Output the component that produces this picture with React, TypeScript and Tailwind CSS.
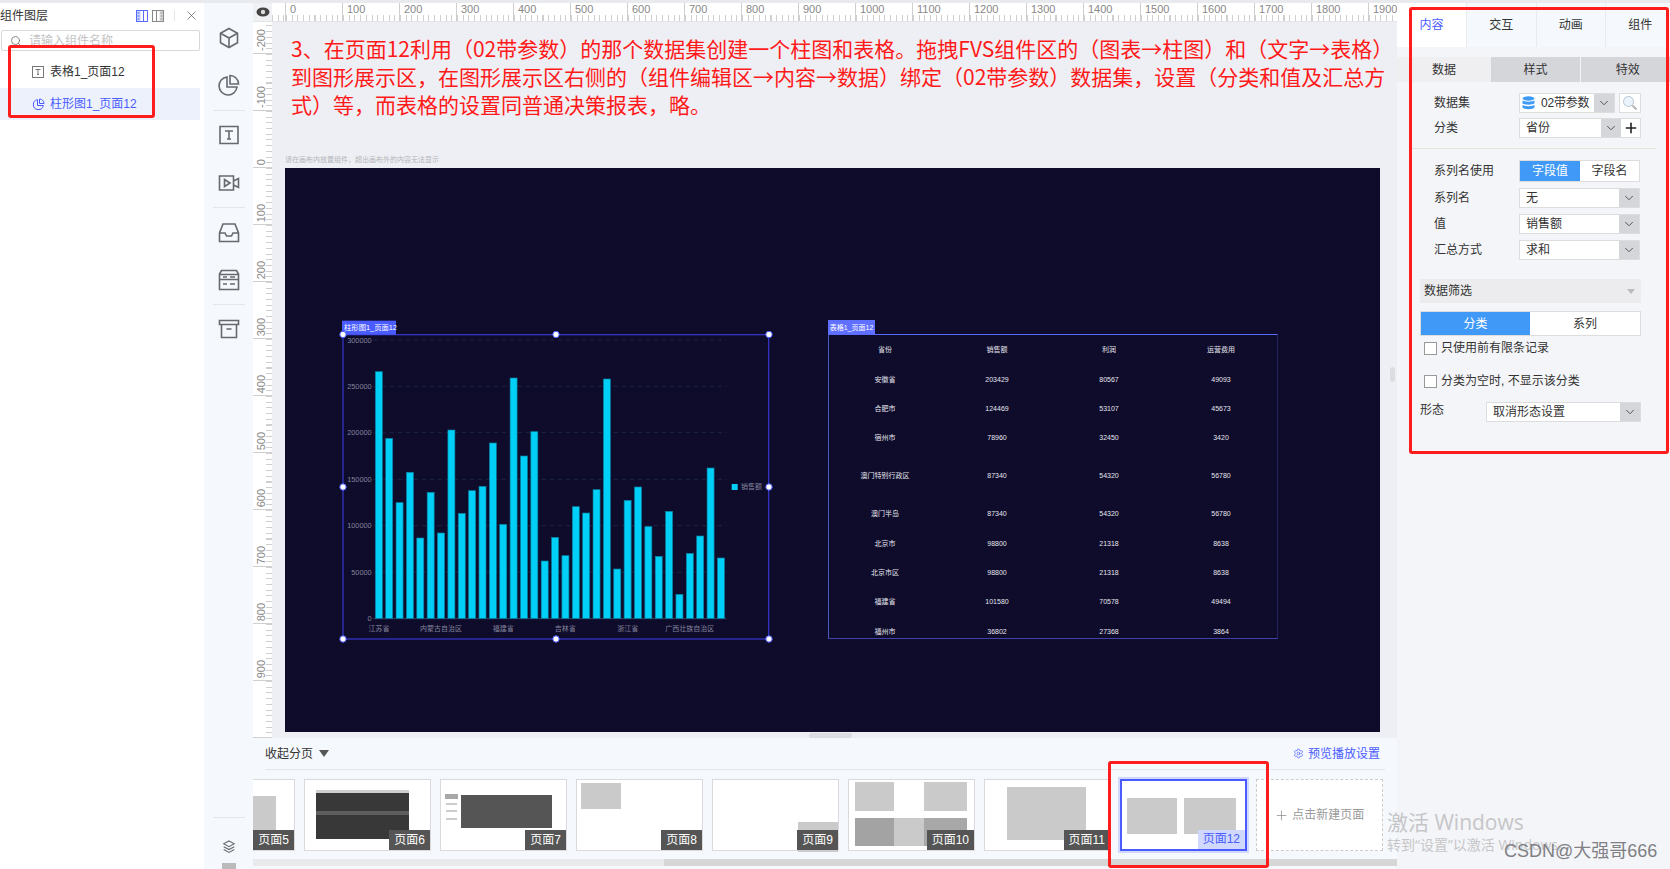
import React from 'react'
import { ChevronDown, X, Plus, Settings, Search } from 'lucide-react'

const hTicks = Array.from({ length: 21 }, (_, i) => i * 100)
const vTicks = [-200, -100, 0, 100, 200, 300, 400, 500, 600, 700, 800, 900, 1000]

// bar centers / tops measured in a 3x crop of the chart
const barTops = [185, 385, 578, 487, 684, 547, 669, 360, 610, 542, 529, 399, 643, 204, 438, 365, 753, 682, 737, 590, 609, 539, 207, 777, 571, 531, 650, 739, 604, 853, 730, 678, 474, 744]
const yLabels = [
  ['300000', 90],
  ['250000', 229],
  ['200000', 368],
  ['150000', 508],
  ['100000', 647],
  ['50000', 787],
  ['0', 925],
] as const
const xLabels = [
  ['江苏省', 147],
  ['内蒙古自治区', 333],
  ['福建省', 520],
  ['吉林省', 706],
  ['浙江省', 893],
  ['广西壮族自治区', 1079],
] as const

const tableRows = [
  ['省份', '销售额', '利润', '运营费用'],
  ['安徽省', '203429', '80567', '49093'],
  ['合肥市', '124469', '53107', '45673'],
  ['宿州市', '78960', '32450', '3420'],
  ['澳门特别行政区', '87340', '54320', '56780'],
  ['澳门半岛', '87340', '54320', '56780'],
  ['北京市', '98800', '21318', '8638'],
  ['北京市区', '98800', '21318', '8638'],
  ['福建省', '101580', '70578', '49494'],
  ['福州市', '36802', '27368', '3864'],
]

const thumbs = [
  { label: '页面5', first: true, blocks: ['left-[80px] top-[16px] w-[27px] h-[34px] bg-[#cacaca]'] },
  {
    label: '页面6',
    blocks: [
      'left-[11px] top-[11px] w-[93px] h-[48px] bg-[#383838]',
      'left-[11px] top-[10px] w-[93px] h-[3px] bg-[#cfcfcf]',
      'left-[11px] top-[31px] w-[93px] h-[4px] bg-[#5e5e5e]',
    ],
  },
  {
    label: '页面7',
    blocks: [
      'left-[20px] top-[15px] w-[91px] h-[33px] bg-[#555555]',
      'left-[4px] top-[14px] w-[13px] h-[5px] bg-[#a8a8a8]',
      'left-[5px] top-[23px] w-[11px] h-[2px] bg-[#cccccc]',
      'left-[5px] top-[30px] w-[11px] h-[2px] bg-[#cccccc]',
      'left-[5px] top-[38px] w-[11px] h-[2px] bg-[#cccccc]',
    ],
  },
  { label: '页面8', blocks: ['left-[4px] top-[3px] w-[40px] h-[26px] bg-[#cacaca]'] },
  { label: '页面9', blocks: ['left-[85px] top-[42px] w-[40px] h-[30px] bg-[#cacaca]'] },
  {
    label: '页面10',
    blocks: [
      'left-[6px] top-[2px] w-[39px] h-[29px] bg-[#cacaca]',
      'left-[75px] top-[2px] w-[43px] h-[29px] bg-[#cacaca]',
      'left-[45px] top-[38px] w-[30px] h-[28px] bg-[#cacaca]',
      'left-[6px] top-[38px] w-[39px] h-[28px] bg-[#a3a3a3]',
      'left-[75px] top-[38px] w-[43px] h-[28px] bg-[#a8a8a8]',
    ],
  },
  { label: '页面11', blocks: ['left-[22px] top-[7px] w-[79px] h-[53px] bg-[#cacaca]'] },
]

function Arrow({ className = 'w-[20px]' }: { className?: string }) {
  return (
    <div className={`${className} h-full bg-[#d5d6da] flex items-center justify-center shrink-0`}>
      <ChevronDown size={14} strokeWidth={1.5} className="text-[#444]" />
    </div>
  )
}

function SelectBox({ value, className = 'w-[121px]' }: { value: string; className?: string }) {
  return (
    <div className={`${className} h-[20px] bg-white border border-[#ddd] flex items-center justify-between`}>
      <span className="pl-[6px]">{value}</span>
      <Arrow />
    </div>
  )
}

function Row({ label, children, className = 'mt-[6px]' }: { label: string; children: React.ReactNode; className?: string }) {
  return (
    <div className={`flex items-center pl-[37px] ${className}`}>
      <span className="w-[85px] shrink-0">{label}</span>
      {children}
    </div>
  )
}

function Check({ label, className }: { label: string; className: string }) {
  return (
    <div className={`flex items-center pl-[27px] h-[14px] ${className}`}>
      <span className="w-[13px] h-[13px] bg-white border border-[#999] mr-[4px]" />
      {label}
    </div>
  )
}

function Thumb({ label, blocks, first }: { label: string; blocks: string[]; first?: boolean }) {
  return (
    <div className={`relative w-[127.5px] h-[72px] shrink-0 bg-white border border-[#d8dade] ${first ? 'ml-[-85.5px]' : ''}`}>
      {blocks.map((b) => (
        <div key={b} className={`absolute ${b}`} />
      ))}
      <div className="absolute right-0 bottom-0 h-[20px] px-[5px] bg-[#555555] text-white text-[12px] leading-[20px]">{label}</div>
    </div>
  )
}

function RailIcon({ children }: { children: React.ReactNode }) {
  return (
    <svg width="24" height="24" viewBox="0 0 24 24" fill="none" stroke="#666a70" strokeWidth="1.6" className="block">
      {children}
    </svg>
  )
}

function PaneIcon({ color, fill, flip, className }: { color: string; fill: string; flip?: boolean; className: string }) {
  return (
    <svg width="12" height="12" viewBox="0 0 12 12" fill="none" className={`${flip ? '-scale-x-100' : ''} ${className}`}>
      <rect x="0.5" y="0.5" width="4" height="11" fill={fill} />
      <rect x="0.5" y="0.5" width="11" height="11" stroke={color} />
      <path d="M7.5 0.5v11M1.5 3h2M1.5 6h2M1.5 9h2" stroke={color} />
    </svg>
  )
}

function HRuler() {
  return (
    <div className="h-[19px] flex bg-white border-b border-[#e3e4e8] shrink-0 overflow-hidden">
      <div className="w-[19px] shrink-0 bg-[#f0f1f4] flex items-center justify-center">
        <svg width="14" height="10" viewBox="0 0 14 10">
          <ellipse cx="7" cy="5" rx="6.5" ry="4.5" fill="#444" />
          <circle cx="7" cy="5" r="2.2" fill="#ddd" />
        </svg>
      </div>
      <div className="w-[13px] shrink-0 mt-auto h-[6px] bg-[repeating-linear-gradient(to_right,#cfcfcf_0,#cfcfcf_1px,transparent_1px,transparent_5.7px)]" />
      {hTicks.map((n) => (
        <div key={n} className="relative w-[57px] h-full shrink-0 border-l border-[#cfcfcf]">
          {n < 2000 && <span className="absolute left-[4px] top-[-1px] text-[11px] leading-[14px] text-[#888]">{n}</span>}
          <div className="absolute left-0 right-0 bottom-0 h-[6px] bg-[repeating-linear-gradient(to_right,#cfcfcf_0,#cfcfcf_1px,transparent_1px,transparent_5.7px)]" />
        </div>
      ))}
    </div>
  )
}

function VRuler() {
  return (
    <div className="w-[19px] h-full shrink-0 bg-white overflow-hidden">
      <div className="mt-[-25px]">
        {vTicks.map((n) => (
          <div key={n} className="relative h-[57px] border-b border-[#cfcfcf]">
            {n < 1000 && (
              <span className="absolute left-[2px] bottom-[2px] [writing-mode:vertical-rl] rotate-180 text-[11px] leading-[12px] text-[#888]">{n}</span>
            )}
            <div className="absolute right-0 top-0 bottom-0 w-[6px] bg-[repeating-linear-gradient(to_bottom,#cfcfcf_0,#cfcfcf_1px,transparent_1px,transparent_5.7px)]" />
          </div>
        ))}
      </div>
    </div>
  )
}

function BarChart() {
  const handles = [
    [343, 334.5],
    [556, 334.5],
    [769, 334.5],
    [343, 487],
    [769, 487],
    [343, 639],
    [556, 639],
    [769, 639],
  ]
  return (
    <svg className="absolute left-[45px] top-[142px]" width="450" height="340" viewBox="0 0 1350 1020">
      {yLabels.map(([t, y]) => (
        <g key={t}>
          {t !== '0' && <line x1="130" x2="1190" y1={y} y2={y} stroke="#1b2444" strokeWidth="3" strokeDasharray="14 10" />}
          <text x="125" y={y + 8} textAnchor="end" fontSize="22" fill="#85859b">{t}</text>
        </g>
      ))}
      <line x1="130" x2="1190" y1="926" y2="926" stroke="#33405f" strokeWidth="3" />
      {barTops.map((top, i) => (
        <rect key={i} x={136 + i * 31.1} y={top} width="21" height={925 - top} fill="#00cff7" stroke="#0a7f9e" strokeWidth="2" />
      ))}
      {xLabels.map(([t, x]) => (
        <text key={t} x={x} y="964" textAnchor="middle" fontSize="21" fill="#85859b">{t}</text>
      ))}
      <rect x="1205" y="522" width="18" height="18" fill="#00cff7" />
      <text x="1233" y="538" fontSize="21" fill="#85859b">销售额</text>
      <rect x="39" y="74" width="1277" height="913" fill="none" stroke="#3434c0" strokeWidth="4" />
      <rect x="36" y="32" width="162" height="42" fill="#4a5cff" />
      <text x="42" y="60" fontSize="22" fill="#fff">柱形图1_页面12</text>
      {handles.map(([x, y]) => (
        <circle key={`${x}-${y}`} cx={(x - 330) * 3} cy={(y - 310) * 3} r="9.5" fill="#fff" stroke="#4a5cff" strokeWidth="3" />
      ))}
    </svg>
  )
}

function DataTable() {
  return (
    <div className="absolute left-[543px] top-[152px] w-[450px]">
      <div className="w-[47px] h-[14px] bg-[#5f6fff] text-white text-[7px] leading-[15px] text-center whitespace-nowrap">表格1_页面12</div>
      <div className="h-[305px] pt-[1px] overflow-hidden border border-t-[#5a6cff] border-l-[#4a5ac0] border-r-[#23235f] border-b-[#3f43a8] text-[7px] text-[#e6e6ee]">
        {tableRows.map((r, i) => (
          <div key={r[0] + i} className={`grid grid-cols-4 items-center text-center ${i === 4 ? 'h-[46.8px]' : 'h-[29.3px]'}`}>
            {r.map((c, j) => (
              <span key={j}>{c}</span>
            ))}
          </div>
        ))}
      </div>
    </div>
  )
}

export default function App() {
  return (
    <div className="relative w-[1670px] h-[869px] overflow-hidden bg-white font-['Liberation_Sans','Noto_Sans_CJK_SC',sans-serif] text-[12px] text-[#333]">
      <div className="h-[3px] bg-[#e9eaee]" />
      <div className="flex h-[866px]">
        {/* layer panel */}
        <aside className="w-[204px] shrink-0 bg-white">
          <div className="h-[25px] flex items-center justify-between pr-[5px]">
            <span>组件图层</span>
            <div className="flex items-center">
              <PaneIcon color="#5a6cff" fill="#c9d2ff" className="mr-[4px]" />
              <PaneIcon color="#888" fill="#ddd" flip className="mr-[10px]" />
              <span className="w-px h-[11px] bg-[#e5e5e5] mr-[9px]" />
              <X size={15} strokeWidth={1.1} className="text-[#555]" />
            </div>
          </div>
          <div className="mt-[2px] w-[199px] h-[21px] ml-[1px] border border-[#d9d9d9] rounded-[2px] flex items-center pl-[8px] text-[#c4c4c4]">
            <Search size={12} strokeWidth={1.5} className="text-[#666] mr-[7px]" />
            请输入组件名称
          </div>
          <div className="pt-[4px]">
            <div className="h-[33px] w-[200px] flex items-center pl-[32px]">
              <svg width="12" height="12" viewBox="0 0 12 12" className="mr-[6px]" fill="none" stroke="#777">
                <rect x="0.5" y="0.5" width="11" height="11" />
                <path d="M3.5 3.5h5M6 3.5v5M5 8.5h2" />
              </svg>
              表格1_页面12
            </div>
            <div className="h-[32px] w-[200px] flex items-center pl-[32px] bg-[#edf1fb] text-[#4a5cff]">
              <svg width="13" height="13" viewBox="0 0 13 13" className="mr-[5px]" fill="none" stroke="#4a5cff">
                <path d="M5.5 1.7a5 5 0 1 0 5.8 5.8H5.5z" />
                <path d="M7.5 1a4.5 4.5 0 0 1 4.5 4.5H7.5z" />
              </svg>
              柱形图1_页面12
            </div>
          </div>
        </aside>

        {/* component rail */}
        <nav className="w-[49px] shrink-0 bg-[#f5f9fd] flex flex-col items-center">
          <div className="mt-[23px]">
            <RailIcon>
              <path d="M12 2.5l8.5 4.7v9.6L12 21.5l-8.5-4.7V7.2z" />
              <path d="M3.5 7.2L12 12l8.5-4.8M12 12v9.5" />
            </RailIcon>
          </div>
          <div className="mt-[23px]">
            <RailIcon>
              <path d="M10 4a9 9 0 1 0 10 10H10z" />
              <path d="M13 2.5a8.5 8.5 0 0 1 8.5 8.5H13z" />
            </RailIcon>
          </div>
          <div className="w-[32px] h-px bg-[#e3e6ea] mt-[13px]" />
          <div className="mt-[12px]">
            <RailIcon>
              <path d="M7 3.5H3v17h4M17 3.5h4v17h-4M3 3.5h18M3 20.5h18" />
              <path d="M8 8h8M12 8v8M10 16h4" />
            </RailIcon>
          </div>
          <div className="mt-[24px]">
            <RailIcon>
              <path d="M2.5 5h14v14h-14zM16.5 10l5-2.5v9l-5-2.5" />
              <path d="M7.5 8.5l5.5 3.5-5.5 3.5z" />
            </RailIcon>
          </div>
          <div className="w-[32px] h-px bg-[#e3e6ea] mt-[12px]" />
          <div className="mt-[13px]">
            <RailIcon>
              <path d="M6 3h12l3.5 9v8.5h-19V12z" />
              <path d="M2.5 12H8l1.5 3h5l1.5-3h5.5" />
            </RailIcon>
          </div>
          <div className="mt-[23px]">
            <RailIcon>
              <path d="M4.5 2.5h15L21.5 6v5.500h-19V6zM2.500 11.500h19v10h-19z" />
              <path d="M2.5 6.5h19M6 16h4M13 16h5M6 9h4M13 9h5" />
            </RailIcon>
          </div>
          <div className="w-[32px] h-px bg-[#e3e6ea] mt-[12px]" />
          <div className="mt-[12px]">
            <RailIcon>
              <path d="M2.5 3.5h19v4h-19zM4.5 7.5v13h15v-13M9.5 12h5" />
            </RailIcon>
          </div>
          <div className="w-[32px] h-px bg-[#e3e6ea] mt-[476px]" />
          <svg width="16" height="16" viewBox="0 0 16 16" fill="none" stroke="#666a70" strokeWidth="1.1" className="mt-[21px]">
            <path d="M8 2l5.5 3L8 8 2.5 5zM2.5 8L8 11l5.5-3M2.5 11L8 14l5.5-3" />
          </svg>
          <div className="w-[14px] h-[6px] bg-[#bbb] mt-[9px]" />
        </nav>

        {/* center */}
        <main className="w-[1144px] shrink-0 flex flex-col">
          <HRuler />
          <div className="h-[716px] flex shrink-0">
            <VRuler />
            <div className="relative flex-1 bg-[#eeeff4] pl-[13px] overflow-hidden">
              <div className="pt-[12px] pl-[6px] pr-[12px] text-[21px] leading-[28px] text-[#ff1a1a] font-['Noto_Sans_CJK_SC',sans-serif]">
                <div className="text-justify [text-align-last:justify] whitespace-nowrap">3、在页面12利用（02带参数）的那个数据集创建一个柱图和表格。拖拽FVS组件区的（图表→柱图）和（文字→表格）</div>
                <div className="text-justify [text-align-last:justify] whitespace-nowrap">到图形展示区，在图形展示区右侧的（组件编辑区→内容→数据）绑定（02带参数）数据集，设置（分类和值及汇总方</div>
                <div>式）等，而表格的设置同普通决策报表，略。</div>
              </div>
              <div className="mt-[36px] h-[12px] text-[7px] leading-[12px] text-[#b4b4b8]">请在画布内放置组件，超出画布外的内容无法显示</div>
              <div className="relative mt-[2px] w-[1095px] h-[564px] bg-[#0e0b2b]">
                <BarChart />
                <DataTable />
              </div>
              <div className="absolute left-[537px] bottom-0 w-[43px] h-[5px] rounded-[3px] bg-[#dcdde0]" />
              <div className="absolute right-[2px] top-[345px] w-[5px] h-[15px] rounded-[3px] bg-[#dcdde0]" />
            </div>
          </div>
          <div className="flex-1 bg-[#f5f9fd] flex flex-col">
            <div className="h-[32px] mx-[12px] border-b border-[#e3e7ec] flex items-center justify-between shrink-0">
              <div className="flex items-center">
                收起分页
                <span className="ml-[6px] w-0 h-0 border-x-[5px] border-x-transparent border-t-[7px] border-t-[#555]" />
              </div>
              <div className="flex items-center text-[#4a5cff] pr-[5px]">
                <Settings size={11} strokeWidth={1.5} className="mr-[4px]" />
                预览播放设置
              </div>
            </div>
            <div className="mt-[9px] h-[72px] flex gap-[8.5px] shrink-0 [clip-path:inset(-3px_0_-3px_0)]">
              {thumbs.map((t) => (
                <Thumb key={t.label} {...t} />
              ))}
              <div className="relative w-[127.5px] h-[72px] shrink-0 bg-white border-2 border-[#4a5cff] ring-2 ring-[#d0d8fe]">
                <div className="absolute left-[5px] top-[17px] w-[50px] h-[36px] bg-[#cacaca]" />
                <div className="absolute left-[62px] top-[17px] w-[52px] h-[36px] bg-[#cacaca]" />
                <div className="absolute right-0 bottom-0 h-[19px] px-[5px] bg-[#d0d8fe] text-[#4a5cff] leading-[19px]">页面12</div>
              </div>
              <div className="w-[127.5px] h-[72px] shrink-0 bg-white border border-dashed border-[#ccc] flex items-center justify-center text-[#999]">
                <Plus size={15} strokeWidth={1} className="mr-[3px] text-[#777]" />
                点击新建页面
              </div>
            </div>
            <div className="mt-[8px] h-[7px] bg-[#e9eaec] flex justify-end shrink-0">
              <div className="w-[733px] h-full bg-[#d6d6d6]" />
            </div>
          </div>
        </main>

        {/* property panel */}
        <section className="flex-1 bg-[#f4f5f8]">
          <div className="h-[44px] flex">
            <div className="w-[69px] bg-white text-[#4a5cff] flex items-center justify-center">内容</div>
            {['交互', '动画', '组件'].map((t) => (
              <div key={t} className="w-[69.5px] bg-[#f5f9fd] border-l border-[#e8ebf0] flex items-center justify-center">{t}</div>
            ))}
          </div>
          <div className="mt-[10px] h-[25px] flex text-[#333]">
            <div className="w-[94px] bg-[#efeff2] flex items-center justify-center">数据</div>
            <div className="w-[89px] bg-[#d5d6da] flex items-center justify-center">样式</div>
            <div className="ml-[1px] flex-1 bg-[#d5d6da] flex items-center justify-center">特效</div>
          </div>

          <Row label="数据集" className="mt-[11px]">
            <div className="w-[96px] h-[20px] bg-white border border-[#ddd] flex items-center justify-between">
              <div className="flex items-center pl-[2px] tracking-[-0.2px]">
                <svg width="13" height="14" viewBox="0 0 13 14" className="mr-[6px]" fill="#3f9af5">
                  <ellipse cx="6.5" cy="2.5" rx="6" ry="2.2" />
                  <path d="M.5 4.3c1 1.8 11 1.8 12 0v3c-1 1.8-11 1.8-12 0zM.5 8.8c1 1.8 11 1.8 12 0v2.7c-1 2.3-11 2.3-12 0z" />
                </svg>
                02带参数
              </div>
              <Arrow />
            </div>
            <div className="ml-[4px] w-[22px] h-[20px] bg-white border border-[#ddd] flex items-center justify-center">
              <svg width="16" height="16" viewBox="0 0 16 16" fill="none">
                <circle cx="6.5" cy="6.5" r="5" fill="#eaf3fb" stroke="#b9c4cf" />
                <path d="M10.5 10.5l4 4" stroke="#b5b5b5" strokeWidth="2" />
              </svg>
            </div>
          </Row>
          <Row label="分类" className="mt-[5px]">
            <div className="w-[122px] h-[20px] bg-white border border-[#ddd] flex items-center justify-between">
              <span className="pl-[6px] flex-1">省份</span>
              <Arrow />
              <div className="w-[19px] flex items-center justify-center">
                <Plus size={16} strokeWidth={2.4} className="text-[#222]" />
              </div>
            </div>
          </Row>
          <div className="mt-[10px] ml-[15px] w-[244px] h-px bg-[#e6e3de]" />
          <Row label="系列名使用" className="mt-[11px]">
            <div className="w-[121px] h-[22px] bg-white border border-[#ddd] flex">
              <div className="w-[60px] bg-[#4099f7] text-white flex items-center justify-center">字段值</div>
              <div className="flex-1 flex items-center justify-center">字段名</div>
            </div>
          </Row>
          <Row label="系列名">
            <SelectBox value="无" />
          </Row>
          <Row label="值">
            <SelectBox value="销售额" />
          </Row>
          <Row label="汇总方式">
            <SelectBox value="求和" />
          </Row>

          <div className="mt-[19px] ml-[23px] w-[221px] h-[24px] bg-[#ececee] flex items-center justify-between px-[4px]">
            数据筛选
            <span className="mr-[2px] w-0 h-0 border-x-[4px] border-x-transparent border-t-[5px] border-t-[#bbb]" />
          </div>
          <div className="mt-[8px] ml-[23px] w-[221px] h-[25px] bg-white border border-[#ddd] flex">
            <div className="w-[109px] bg-[#4099f7] text-white flex items-center justify-center">分类</div>
            <div className="flex-1 flex items-center justify-center">系列</div>
          </div>
          <Check label="只使用前有限条记录" className="mt-[5px]" />
          <Check label="分类为空时, 不显示该分类" className="mt-[19px]" />
          <div className="mt-[14px] pl-[23px] flex items-center">
            <span className="w-[66px] -mt-[4px]">形态</span>
            <SelectBox value="取消形态设置" className="w-[155px]" />
          </div>
        </section>
      </div>

      {/* annotations and watermarks over the screenshot */}
      <div className="absolute left-[8px] top-[45px] w-[147px] h-[73px] border-[3px] border-[#ff1c1c] rounded-[3px]" />
      <div className="absolute left-[1409px] top-[7px] w-[260px] h-[447px] border-[3px] border-[#ff1c1c] rounded-[3px]" />
      <div className="absolute left-[1108px] top-[761px] w-[161px] h-[107px] border-[3px] border-[#ff1c1c] rounded-[3px]" />
      <div className="absolute left-[1387px] top-[809px] text-[21px] leading-[26px] text-[#c6c6c8] whitespace-nowrap font-['Open_Sans','Noto_Sans_CJK_SC',sans-serif]">激活 Windows</div>
      <div className="absolute left-[1387px] top-[836px] text-[14px] leading-[18px] text-[#c6c6c8] whitespace-nowrap font-['Open_Sans','Noto_Sans_CJK_SC',sans-serif]">转到“设置”以激活 Windows。</div>
      <div className="absolute left-[1504px] top-[840px] text-[18px] leading-[22px] text-[#808084] whitespace-nowrap">CSDN@大强哥666</div>
    </div>
  )
}
